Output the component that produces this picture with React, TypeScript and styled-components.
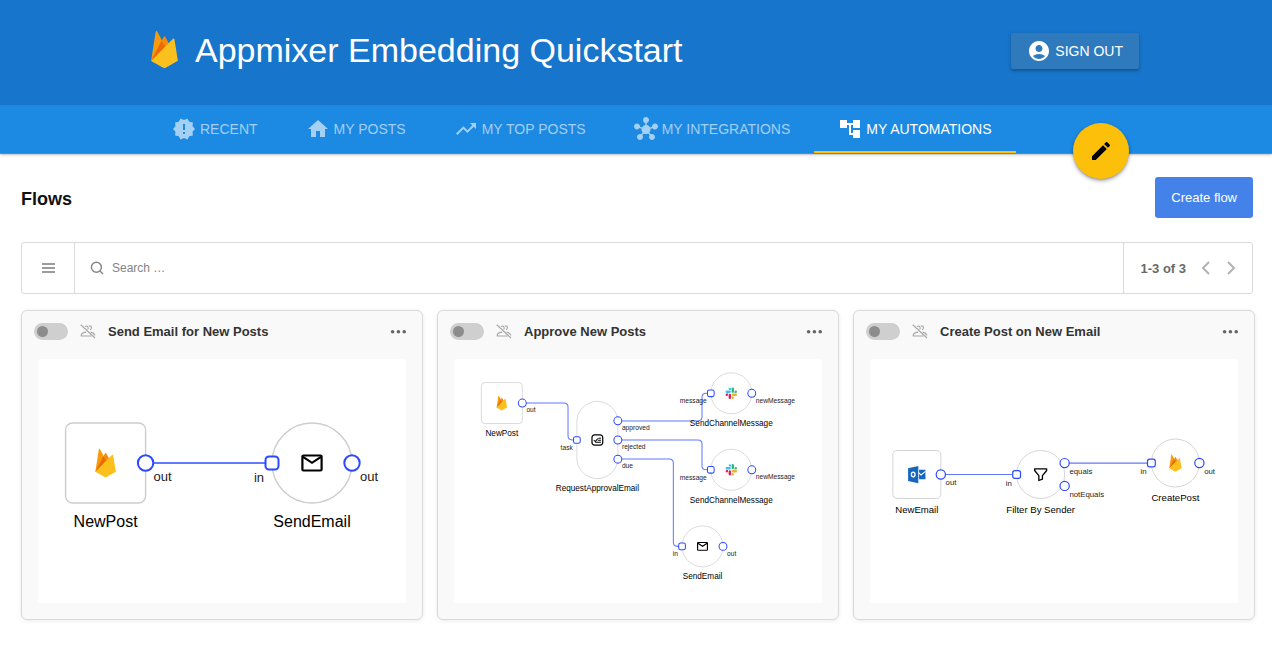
import React from 'react';
import styled, { createGlobalStyle, css } from 'styled-components';
import {
  MdAccountCircle,
  MdAccountTree,
  MdEdit,
  MdHome,
  MdHub,
  MdNewReleases,
  MdTrendingUp,
} from 'react-icons/md';

const GlobalStyle = createGlobalStyle`
  *, *::before, *::after { box-sizing: border-box; }
  body {
    margin: 0;
    background: #fff;
    color: #111;
    font-family: "Liberation Sans", Helvetica, Arial, sans-serif;
    -webkit-font-smoothing: antialiased;
  }
  button, input { font: inherit; color: inherit; }
  button { cursor: pointer; border: 0; padding: 0; background: none; }
`;

/* ---------- header ---------- */

const Banner = styled.header`
  background: #1775cb;
  color: #fff;
  padding: 33px 16px 36px;
`;

const BannerInner = styled.div`
  display: flex;
  align-items: center;
  justify-content: space-between;
  max-width: 1006px;
  height: 36px;
  margin: 0 auto;
`;

const Brand = styled.div`
  display: flex;
  align-items: center;
  gap: 17px;
  padding-left: 18px;

  svg { margin-bottom: 4px; }
`;

const BrandTitle = styled.h1`
  margin: 0;
  padding-bottom: 2px;
  font-size: 34px;
  line-height: 36px;
  font-weight: 400;
  white-space: nowrap;
`;

const SignOut = styled.button`
  display: flex;
  align-items: center;
  gap: 4px;
  height: 36px;
  padding: 0 16px;
  border-radius: 2px;
  background: #2f7abd;
  font-size: 14px;
  box-shadow: 0 2px 2px rgba(0, 0, 0, 0.16), 0 1px 4px rgba(0, 0, 0, 0.16);
`;

const TabBar = styled.nav`
  position: relative;
  background: #1c89e3;
  box-shadow: 0 1px 1px rgba(0, 0, 0, 0.4), 0 2px 3px rgba(0, 0, 0, 0.2);
  padding: 0 16px;
`;

const TabBarInner = styled.div`
  position: relative;
  display: flex;
  max-width: 1006px;
  height: 48px;
  margin: 0 auto;
  padding-left: 15px;
`;

const Tab = styled.a<{ $active?: boolean }>`
  display: flex;
  align-items: center;
  gap: 4px;
  height: 48px;
  padding: 0 24px;
  border-bottom: 2px solid transparent;
  padding-top: 2px;
  font-size: 14px;
  white-space: nowrap;
  text-decoration: none;
  color: rgba(255, 255, 255, 0.6);
  ${(p) =>
    p.$active &&
    css`
      color: #fff;
      border-bottom-color: #fcbf0a;
    `}
`;

const ComposeButton = styled.button`
  position: absolute;
  right: 10px;
  top: 18px;
  display: flex;
  align-items: center;
  justify-content: center;
  width: 56px;
  height: 56px;
  border-radius: 50%;
  background: #fcbf0a;
  color: #000;
  box-shadow: 0 2px 4px rgba(0, 0, 0, 0.3), 0 1px 2px rgba(0, 0, 0, 0.2);
`;

/* ---------- flows page ---------- */

const Page = styled.main`
  padding: 24px 19px 24px 21px;
`;

const PageHead = styled.div`
  display: flex;
  align-items: center;
  justify-content: space-between;
  margin-bottom: 24px;
`;

const PageTitle = styled.h2`
  margin: 0;
  font-size: 18px;
  line-height: 24px;
  font-weight: 700;
  padding-top: 2px;
`;

const CreateButton = styled.button`
  height: 41px;
  padding: 0 16px;
  border-radius: 3px;
  background: #4482ea;
  color: #fff;
  font-size: 13px;
`;

const SearchBar = styled.div`
  display: flex;
  height: 52px;
  border: 1px solid #dadada;
  border-radius: 3px;
  margin-bottom: 16px;
`;

const MenuButton = styled.button`
  display: flex;
  align-items: center;
  justify-content: center;
  width: 53px;
  border-right: 1px solid #dadada;
  color: #7c7c7c;
`;

const SearchField = styled.label`
  display: flex;
  flex: 1;
  align-items: center;
  gap: 8px;
  padding-left: 15px;
  color: #858585;
`;

const SearchInput = styled.input`
  flex: 1;
  min-width: 0;
  height: 32px;
  padding: 0;
  border: 0;
  outline: 0;
  background: none;
  font-size: 12px;
  &::placeholder { color: #858585; opacity: 1; }
`;

const Pager = styled.div`
  display: flex;
  align-items: center;
  gap: 9px;
  border-left: 1px solid #dadada;
  padding: 0 13px 0 16px;
  color: #6a6a6a;
  font-size: 13px;
`;

const PagerCount = styled.span`
  font-weight: 700;
  margin-right: 3px;
`;

const PagerButton = styled.button`
  display: flex;
  width: 16px;
  height: 16px;
  color: #b2b2b2;
`;

const CardGrid = styled.div`
  display: grid;
  grid-template-columns: repeat(3, minmax(0, 1fr));
  gap: 14px;
  margin-right: -2px;
`;

const Card = styled.article`
  padding: 0 16px 16px;
  border: 1px solid #dadada;
  border-radius: 6px;
  background: #f9f9f9;
  box-shadow: 0 1px 4px rgba(0, 0, 0, 0.08);
`;

const CardHead = styled.div`
  display: flex;
  align-items: center;
  height: 48px;
  margin: 0 -4px;
  padding: 0 4px 7px 0;
`;

const Toggle = styled.input`
  appearance: none;
  flex: none;
  width: 34px;
  height: 17px;
  margin: 0 12px 0 0;
  border-radius: 9px;
  background: #cfcfcf;
  display: flex;
  align-items: center;
  cursor: pointer;

  &::before {
    content: '';
    width: 11px;
    height: 11px;
    margin: 0 3px;
    border-radius: 50%;
    background: #8d8d8d;
  }
  &:checked { justify-content: flex-end; background: #a9c6f7; }
  &:checked::before { background: #4482ea; }
`;

const CardTitle = styled.h3`
  flex: 1;
  margin: 0 0 0 12px;
  font-size: 13px;
  line-height: 16px;
  font-weight: 700;
  color: #333;
`;

const MoreButton = styled.button`
  display: flex;
  color: #666;
`;

const Canvas = styled.svg`
  display: block;
  width: 100%;
  height: auto;
  border-radius: 2px;
  background: #fff;
  font-family: "Liberation Sans", Helvetica, Arial, sans-serif;
`;

const Outline = styled.rect`
  fill: #fff;
  stroke: #cdcdcd;
  stroke-width: 1.4;
`;

const Wire = styled.path`
  fill: none;
  stroke: #6079ff;
  stroke-width: 2;
`;

const PortShape = styled.rect`
  fill: #fff;
  stroke: #2b49ff;
  stroke-width: 2;
`;

const NodeName = styled.text`
  font-size: 16px;
  text-anchor: middle;
  fill: #000;
`;

const PortName = styled.text<{ $end?: boolean }>`
  font-size: 13px;
  text-anchor: ${(p) => (p.$end ? 'end' : 'start')};
  fill: #222;
`;

/* ---------- drawings ---------- */

const FirebaseShapes = () => (
  <>
    <path fill="#f58a07" d="M3.3 19.4 11.52 3.67a.54.54 0 0 1 .96 0L15.4 9Z" />
    <path fill="#f79a0b" d="M3.3 19.4 6.25.46A.54.54 0 0 1 7.27.29L11.6 8.4Z" />
    <path fill="#ea6b05" d="M3.3 19.4 10.1 6.200 12.800 11Z" />
    <path
      fill="#fac01e"
      d="m20.7 19.36-2.27-14a.54.54 0 0 0-.92-.3L3.3 19.4l7.87 4.4a1.62 1.62 0 0 0 1.59 0Z"
    />
  </>
);

const FirebaseLogo = () => (
  <svg width="27" height="37" viewBox="3.3 0 17.4 24" aria-hidden="true">
    <FirebaseShapes />
  </svg>
);

const MenuIcon = () => (
  <svg width="13" height="10" viewBox="0 0 13 10" aria-hidden="true">
    <path d="M0 1h13M0 5h13M0 9h13" stroke="currentColor" strokeWidth="1.6" />
  </svg>
);

const SearchIcon = () => (
  <svg width="14" height="14" viewBox="0 0 14 14" fill="none" stroke="currentColor" strokeWidth="1.4" aria-hidden="true">
    <circle cx="6.4" cy="6.3" r="5" />
    <path d="m10 10 3 3" />
  </svg>
);

const Chevron = ({ d }: { d: string }) => (
  <svg width="16" height="16" viewBox="0 0 16 16" fill="none" stroke="currentColor" strokeWidth="2" aria-hidden="true">
    <path d={d} />
  </svg>
);

const UnsharedIcon = () => (
  <svg width="16" height="15" viewBox="0 0 16 15" fill="none" stroke="#a8a8a8" strokeWidth="1.2" aria-hidden="true">
    <path d="M.8.8 15 14" />
    <path d="M5 2.6c1.6-1.1 3.2-.4 3.2 1.3 0 .6-.2 1.1-.6 1.5" />
    <path d="M9 2c1.5-.4 2.6.6 2.4 2-.1.8-.6 1.4-1.4 1.6" />
    <path d="M6.4 8.200C3.400 8.300 1.200 9.600 1.200 12H11.500" />
    <path d="M10.600 8.200c2.400.4 3.800 1.400 4.200 3.100" />
  </svg>
);

const DotsIcon = () => (
  <svg width="16" height="4" viewBox="0 0 16 4" fill="currentColor" aria-hidden="true">
    <circle cx="2.6" cy="1.8" r="1.8" />
    <circle cx="8.4" cy="1.8" r="1.8" />
    <circle cx="14.2" cy="1.8" r="1.8" />
  </svg>
);

/* Node glyphs are drawn around the origin, which is the node's centre. */
type Glyph = 'firebase' | 'mail' | 'slack' | 'approval' | 'filter' | 'outlook';

const glyphs: Record<Glyph, React.ReactNode> = {
  firebase: (
    <g transform="scale(1.18) translate(-12 -12)">
      <FirebaseShapes />
    </g>
  ),
  mail: (
    <g fill="none" stroke="#000" strokeWidth="2.2">
      <rect x="-9.6" y="-7.5" width="19.2" height="15" rx="1" />
      <path d="M-9-6.2 0-.2 9-6.2" />
    </g>
  ),
  slack: (
    <g transform="scale(0.92) translate(-12 -12)">
      <path
        fill="#e01e5a"
        d="M5.04 15.17a2.53 2.53 0 1 1-2.52-2.53h2.52zM6.31 15.17a2.53 2.53 0 0 1 5.05 0v6.31a2.53 2.53 0 1 1-5.05 0z"
      />
      <path
        fill="#36c5f0"
        d="M8.83 5.04a2.53 2.53 0 1 1 2.53-2.52v2.52zM8.83 6.31a2.53 2.53 0 0 1 0 5.05H2.52a2.53 2.53 0 1 1 0-5.05z"
      />
      <path
        fill="#2eb67d"
        d="M18.96 8.83a2.53 2.53 0 1 1 2.52 2.53h-2.52zM17.69 8.83a2.53 2.53 0 0 1-5.05 0V2.52a2.53 2.53 0 1 1 5.05 0z"
      />
      <path
        fill="#ecb22e"
        d="M15.17 18.96a2.53 2.53 0 1 1-2.53 2.52v-2.52zM15.17 17.69a2.53 2.53 0 0 1 0-5.05h6.31a2.53 2.53 0 1 1 0 5.05z"
      />
    </g>
  ),
  approval: (
    <g fill="none" stroke="#000" strokeWidth="2.4">
      <rect x="-10.5" y="-10" width="21" height="20" rx="5" />
      <path strokeWidth="2" d="m-7 0 3 3 5-6M2-3.6h5M1 .4h6M-4 4.6H7" />
    </g>
  ),
  filter: (
    <path
      fill="none"
      stroke="#000"
      strokeWidth="2.2"
      strokeLinejoin="round"
      d="M-10-9.3H10v2.6L3 2v5.6L-3 10V2l-7-8.7Z"
    />
  ),
  outlook: (
    <g>
      <path fill="#1566c0" d="M-14.5-10.5 2.5-14v28.500l-17-3.500Z" />
      <path fill="#1566c0" d="M3.8-8H14.4V8H3.8Z" />
      <path fill="none" stroke="#fff" strokeWidth="1.8" d="M3-3 7 .8l7.4-6" />
      <ellipse cx="-6" cy="0" rx="3" ry="4" fill="none" stroke="#fff" strokeWidth="2.2" />
    </g>
  ),
};

interface Port {
  name: string;
  dy?: number;
}

interface FlowNode {
  name: string;
  x: number;
  y: number;
  height?: number;
  square?: boolean;
  glyph: Glyph;
  input?: string;
  outputs: Port[];
}

interface Flow {
  title: string;
  viewBox: string;
  wires: string[];
  nodes: FlowNode[];
}

const DiagramNode = ({ node }: { node: FlowNode }) => {
  const h = node.height ?? 80;
  return (
    <g transform={`translate(${node.x} ${node.y})`}>
      <Outline x={-40} y={-h / 2} width={80} height={h} rx={node.square ? 7 : 40} />
      {glyphs[node.glyph]}
      {node.input && (
        <>
          <PortShape x={-46.5} y={-6.5} width={13} height={13} rx={3.5} />
          <PortName $end x={-48} y={19}>
            {node.input}
          </PortName>
        </>
      )}
      {node.outputs.map(({ name, dy = 0 }) => (
        <React.Fragment key={name}>
          <PortShape x={32.3} y={dy - 7.7} width={15.4} height={15.4} rx={7.7} />
          <PortName x={48} y={dy + 18}>
            {name}
          </PortName>
        </React.Fragment>
      ))}
      <NodeName y={h / 2 + 24}>{node.name}</NodeName>
    </g>
  );
};

const flows: Flow[] = [
  {
    title: 'Send Email for New Posts',
    viewBox: '0 0 368 244',
    wires: ['M107 104H234'],
    nodes: [
      { name: 'NewPost', x: 67.6, y: 104, square: true, glyph: 'firebase', outputs: [{ name: 'out' }] },
      { name: 'SendEmail', x: 274, y: 104, glyph: 'mail', input: 'in', outputs: [{ name: 'out' }] },
    ],
  },
  {
    title: 'Approve New Posts',
    viewBox: '0 0 718.75 476.56',
    wires: [
      'M133 86H214.700Q222.700 86 222.700 94V150Q222.700 158 230.700 158H240',
      'M320 121H476.400Q484.400 121 484.400 113V75Q484.400 67 492.400 67H502',
      'M320 158H476.400Q484.400 158 484.400 166V208.400Q484.400 216.400 492.400 216.400H502',
      'M320 195.500H420.400Q428.400 195.500 428.400 203.500V358Q428.400 366 436.400 366H445',
    ],
    nodes: [
      { name: 'NewPost', x: 93.4, y: 86, square: true, glyph: 'firebase', outputs: [{ name: 'out' }] },
      {
        name: 'RequestApprovalEmail',
        x: 280,
        y: 158.2,
        height: 151,
        glyph: 'approval',
        input: 'task',
        outputs: [{ name: 'approved', dy: -37.5 }, { name: 'rejected' }, { name: 'due', dy: 37.5 }],
      },
      { name: 'SendChannelMessage', x: 541.6, y: 67, glyph: 'slack', input: 'message', outputs: [{ name: 'newMessage' }] },
      { name: 'SendChannelMessage', x: 541.6, y: 216.4, glyph: 'slack', input: 'message', outputs: [{ name: 'newMessage' }] },
      { name: 'SendEmail', x: 485.4, y: 366, glyph: 'mail', input: 'in', outputs: [{ name: 'out' }] },
    ],
  },
  {
    title: 'Create Post on New Email',
    viewBox: '0 0 613.33 406.67',
    wires: ['M118 192.500H244', 'M324 173.400H469'],
    nodes: [
      { name: 'NewEmail', x: 78, y: 192.5, square: true, glyph: 'outlook', outputs: [{ name: 'out' }] },
      {
        name: 'Filter By Sender',
        x: 284.4,
        y: 192.5,
        glyph: 'filter',
        input: 'in',
        outputs: [{ name: 'equals', dy: -19 }, { name: 'notEquals', dy: 19 }],
      },
      { name: 'CreatePost', x: 509, y: 173.4, glyph: 'firebase', input: 'in', outputs: [{ name: 'out' }] },
    ],
  },
];

const tabs = [
  { label: 'RECENT', Icon: MdNewReleases },
  { label: 'MY POSTS', Icon: MdHome },
  { label: 'MY TOP POSTS', Icon: MdTrendingUp },
  { label: 'MY INTEGRATIONS', Icon: MdHub },
  { label: 'MY AUTOMATIONS', Icon: MdAccountTree, active: true },
];

const FlowCard = ({ flow }: { flow: Flow }) => (
  <Card>
    <CardHead>
      <Toggle type="checkbox" role="switch" aria-label={`Run ${flow.title}`} />
      <UnsharedIcon />
      <CardTitle>{flow.title}</CardTitle>
      <MoreButton type="button" aria-label="More actions">
        <DotsIcon />
      </MoreButton>
    </CardHead>
    <Canvas viewBox={flow.viewBox} role="img" aria-label={`${flow.title} diagram`}>
      {flow.wires.map((d) => (
        <Wire key={d} d={d} />
      ))}
      {flow.nodes.map((node, i) => (
        <DiagramNode key={i} node={node} />
      ))}
    </Canvas>
  </Card>
);

export default function App() {
  return (
    <>
      <GlobalStyle />
      <Banner>
        <BannerInner>
          <Brand>
            <FirebaseLogo />
            <BrandTitle>Appmixer Embedding Quickstart</BrandTitle>
          </Brand>
          <SignOut type="button">
            <MdAccountCircle size={24} />
            SIGN OUT
          </SignOut>
        </BannerInner>
      </Banner>
      <TabBar>
        <TabBarInner>
          {tabs.map(({ label, Icon, active }) => (
            <Tab key={label} href="#" $active={active} aria-current={active ? 'page' : undefined}>
              <Icon size={24} />
              {label}
            </Tab>
          ))}
          <ComposeButton type="button" aria-label="New post">
            <MdEdit size={24} />
          </ComposeButton>
        </TabBarInner>
      </TabBar>
      <Page>
        <PageHead>
          <PageTitle>Flows</PageTitle>
          <CreateButton type="button">Create flow</CreateButton>
        </PageHead>
        <SearchBar>
          <MenuButton type="button" aria-label="Menu">
            <MenuIcon />
          </MenuButton>
          <SearchField>
            <SearchIcon />
            <SearchInput type="text" placeholder="Search …" aria-label="Search" />
          </SearchField>
          <Pager>
            <PagerCount>1-3 of 3</PagerCount>
            <PagerButton type="button" aria-label="Previous page">
              <Chevron d="M11 2 5 8l6 6" />
            </PagerButton>
            <PagerButton type="button" aria-label="Next page">
              <Chevron d="m5 2 6 6-6 6" />
            </PagerButton>
          </Pager>
        </SearchBar>
        <CardGrid>
          {flows.map((flow) => (
            <FlowCard key={flow.title} flow={flow} />
          ))}
        </CardGrid>
      </Page>
    </>
  );
}
